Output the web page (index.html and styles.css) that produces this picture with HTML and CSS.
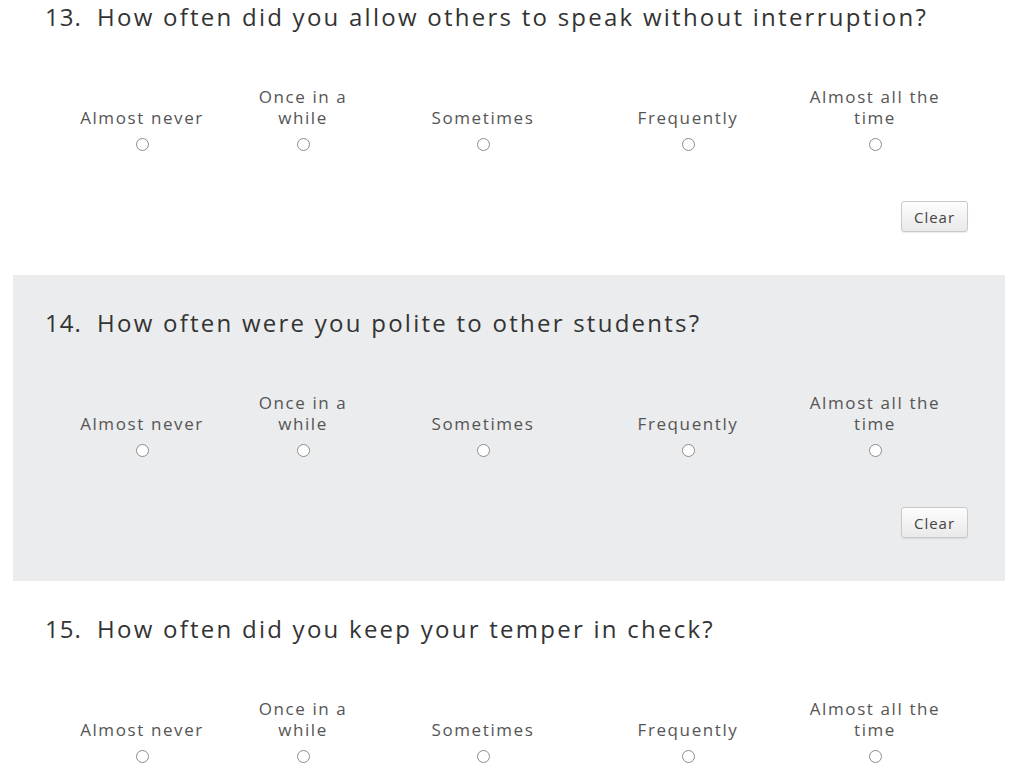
FILE: index.html
```html
<!DOCTYPE html>
<html>
<head>
<meta charset="utf-8">
<link rel="stylesheet" href="styles.css">
</head>
<body>
<div class="survey">
  <section class="question">
    <h2 class="q-title"><span class="q-num">13.</span>How often did you allow others to speak without interruption?</h2>
    <div class="scale">
      <label class="opt"><span class="opt-label">Almost never</span><input type="radio" name="q13"></label>
      <label class="opt"><span class="opt-label">Once in a<br>while</span><input type="radio" name="q13"></label>
      <label class="opt"><span class="opt-label">Sometimes</span><input type="radio" name="q13"></label>
      <label class="opt"><span class="opt-label">Frequently</span><input type="radio" name="q13"></label>
      <label class="opt"><span class="opt-label">Almost all the<br>time</span><input type="radio" name="q13"></label>
    </div>
    <div class="actions"><button class="clear-btn">Clear</button></div>
  </section>
  <section class="question alt">
    <h2 class="q-title"><span class="q-num">14.</span>How often were you polite to other students?</h2>
    <div class="scale">
      <label class="opt"><span class="opt-label">Almost never</span><input type="radio" name="q14"></label>
      <label class="opt"><span class="opt-label">Once in a<br>while</span><input type="radio" name="q14"></label>
      <label class="opt"><span class="opt-label">Sometimes</span><input type="radio" name="q14"></label>
      <label class="opt"><span class="opt-label">Frequently</span><input type="radio" name="q14"></label>
      <label class="opt"><span class="opt-label">Almost all the<br>time</span><input type="radio" name="q14"></label>
    </div>
    <div class="actions"><button class="clear-btn">Clear</button></div>
  </section>
  <section class="question">
    <h2 class="q-title"><span class="q-num">15.</span>How often did you keep your temper in check?</h2>
    <div class="scale">
      <label class="opt"><span class="opt-label">Almost never</span><input type="radio" name="q15"></label>
      <label class="opt"><span class="opt-label">Once in a<br>while</span><input type="radio" name="q15"></label>
      <label class="opt"><span class="opt-label">Sometimes</span><input type="radio" name="q15"></label>
      <label class="opt"><span class="opt-label">Frequently</span><input type="radio" name="q15"></label>
      <label class="opt"><span class="opt-label">Almost all the<br>time</span><input type="radio" name="q15"></label>
    </div>
  </section>
</div>
</body>
</html>
```
FILE: styles.css
```css
html, body {
  margin: 0;
  padding: 0;
  background: #ffffff;
  overflow: hidden;
}
body {
  font-family: "Open Sans", "Noto Sans", sans-serif;
  color: #3a3a3a;
}
.survey {
  margin-top: -31px;
  padding: 0 19px 0 13px;
}
.question {
  padding: 32px 37px 42px 32px;
  box-sizing: border-box;
  height: 306px;
}
.question.alt {
  background: #ebeced;
}
.q-title {
  margin: 0;
  font-size: 24px;
  line-height: 32px;
  font-weight: 400;
  color: #333333;
  letter-spacing: 2.25px;
  display: flex;
}
.q-num {
  width: 52px;
  flex: none;
  letter-spacing: 1px;
}
.scale {
  display: grid;
  grid-template-columns: 160px 162px 198px 212px 162px;
  margin: 53px 0 0 17px;
}
.opt {
  display: flex;
  flex-direction: column;
  align-items: center;
  justify-content: flex-end;
}
.opt-label {
  font-size: 17px;
  line-height: 21px;
  color: #555555;
  text-align: center;
  letter-spacing: 1.6px;
}
.opt input {
  appearance: none;
  -webkit-appearance: none;
  width: 13px;
  height: 13px;
  margin: 10px 0 0;
  border: 1px solid #8c8c8c;
  border-radius: 50%;
  background: #ffffff;
  box-sizing: border-box;
}
.actions {
  display: flex;
  justify-content: flex-end;
  margin-top: 50px;
}
.clear-btn {
  font-family: "Open Sans", "Noto Sans", sans-serif;
  font-size: 15px;
  letter-spacing: 1px;
  color: #444444;
  width: 67px;
  height: 31px;
  border: 1px solid #c9c9c9;
  border-radius: 3px;
  background: linear-gradient(#fdfdfd, #e9e9e9);
  box-shadow: 0 1px 1px rgba(0,0,0,0.08);
  padding: 0;
}
```
